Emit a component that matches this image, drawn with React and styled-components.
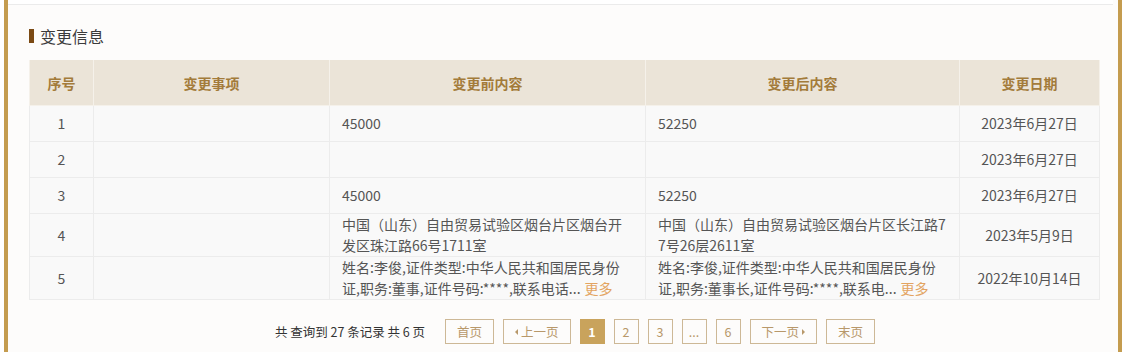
import React from "react";
import styled, { createGlobalStyle } from "styled-components";

const GlobalStyle = createGlobalStyle`
  body {
    margin: 0;
    background: #ffffff;
    font-family: "Microsoft YaHei", "Noto Sans CJK SC", "Noto Sans", sans-serif;
  }
`;

const Frame = styled.div`
  margin-left: 4px;
  width: 1110px;
  height: 352px;
  border-left: 4px solid #c49c4f;
  border-right: 4px solid #c49c4f;
  background: #fdfcfb;
  overflow: hidden;
`;

const TopStrip = styled.div`
  height: 4px;
  margin-right: 5px;
  border-bottom: 1px solid #ebebeb;
  background: #ffffff;
`;

const Panel = styled.section`
  padding: 21px 15px 0 21px;
`;

const Title = styled.h3`
  display: flex;
  align-items: center;
  gap: 6px;
  margin: 0 0 14px;
  height: 20px;
  font-size: 16px;
  font-weight: normal;
  color: #3b3b3b;

  &::before {
    content: "";
    width: 5px;
    height: 14px;
    background: #7b4a14;
  }
`;

const Table = styled.table`
  width: 1070px;
  border-collapse: collapse;
  table-layout: fixed;
  font-size: 14px;
  color: #555;
`;

const Th = styled.th`
  height: 45px;
  padding: 0;
  background: #ebe4d8;
  color: #a37b3a;
  font-weight: bold;
  text-align: center;
  border: 1px solid #f5f1ea;
  border-top: none;
`;

const Td = styled.td`
  height: ${(p) => (p.$tall ? "42px" : "35px")};
  padding: 0 ${(p) => (p.$center ? "0" : "12px")};
  background: #f9f9f9;
  border: 1px solid #ececec;
  text-align: ${(p) => (p.$center ? "center" : "left")};
  line-height: 21px;
  vertical-align: middle;
  word-break: break-all;
`;

const More = styled.a`
  margin-left: 4px;
  color: #e3a461;
  cursor: pointer;
`;

const Pager = styled.div`
  display: flex;
  align-items: center;
  justify-content: center;
  gap: 9px;
  margin-top: 19px;
  padding-left: 18px;
  font-size: 12.5px;
`;

const Summary = styled.span`
  color: #333;
  margin-right: 11px;
`;

const PageBtn = styled.span`
  display: inline-flex;
  align-items: center;
  justify-content: center;
  gap: 3px;
  box-sizing: border-box;
  height: 25px;
  min-width: 25px;
  padding: 0 ${(p) => (p.$wide ? "11px" : "0")};
  border: 1px solid ${(p) => (p.$active ? "#c9a35c" : "#cdb896")};
  background: ${(p) => (p.$active ? "#c9a35c" : "transparent")};
  color: ${(p) => (p.$active ? "#fff" : "#b8986a")};
  font-weight: ${(p) => (p.$active ? "bold" : "normal")};
  cursor: pointer;
`;

const Arrow = styled.span`
  width: 0;
  height: 0;
  border-top: 3px solid transparent;
  border-bottom: 3px solid transparent;
  ${(p) =>
    p.$dir === "left"
      ? "border-right: 3px solid #b8986a;"
      : "border-left: 3px solid #b8986a;"}
`;

const rows = [
  { no: 1, before: "45000", after: "52250", date: "2023年6月27日" },
  { no: 2, before: "", after: "", date: "2023年6月27日" },
  { no: 3, before: "45000", after: "52250", date: "2023年6月27日" },
  {
    no: 4,
    tall: true,
    before: "中国（山东）自由贸易试验区烟台片区烟台开发区珠江路66号1711室",
    after: "中国（山东）自由贸易试验区烟台片区长江路77号26层2611室",
    date: "2023年5月9日",
  },
  {
    no: 5,
    tall: true,
    before: "姓名:李俊,证件类型:中华人民共和国居民身份证,职务:董事,证件号码:****,联系电话...",
    after: "姓名:李俊,证件类型:中华人民共和国居民身份证,职务:董事长,证件号码:****,联系电...",
    date: "2022年10月14日",
    more: true,
  },
];

export default function App() {
  return (
    <>
      <GlobalStyle />
      <Frame>
        <TopStrip />
        <Panel>
          <Title>变更信息</Title>
          <Table>
            <colgroup>
              <col style={{ width: 64 }} />
              <col style={{ width: 236 }} />
              <col style={{ width: 316 }} />
              <col style={{ width: 314 }} />
              <col style={{ width: 140 }} />
            </colgroup>
            <thead>
              <tr>
                <Th>序号</Th>
                <Th>变更事项</Th>
                <Th>变更前内容</Th>
                <Th>变更后内容</Th>
                <Th>变更日期</Th>
              </tr>
            </thead>
            <tbody>
              {rows.map((r) => (
                <tr key={r.no}>
                  <Td $center $tall={r.tall}>{r.no}</Td>
                  <Td $tall={r.tall}></Td>
                  <Td $tall={r.tall}>
                    {r.before}
                    {r.more && <More>更多</More>}
                  </Td>
                  <Td $tall={r.tall}>
                    {r.after}
                    {r.more && <More>更多</More>}
                  </Td>
                  <Td $center $tall={r.tall}>{r.date}</Td>
                </tr>
              ))}
            </tbody>
          </Table>
          <Pager>
            <Summary>共 查询到 27 条记录 共 6 页</Summary>
            <PageBtn $wide>首页</PageBtn>
            <PageBtn $wide>
              <Arrow $dir="left" />
              上一页
            </PageBtn>
            <PageBtn $active>1</PageBtn>
            <PageBtn>2</PageBtn>
            <PageBtn>3</PageBtn>
            <PageBtn>...</PageBtn>
            <PageBtn>6</PageBtn>
            <PageBtn $wide>
              下一页
              <Arrow $dir="right" />
            </PageBtn>
            <PageBtn $wide>末页</PageBtn>
          </Pager>
        </Panel>
      </Frame>
    </>
  );
}
